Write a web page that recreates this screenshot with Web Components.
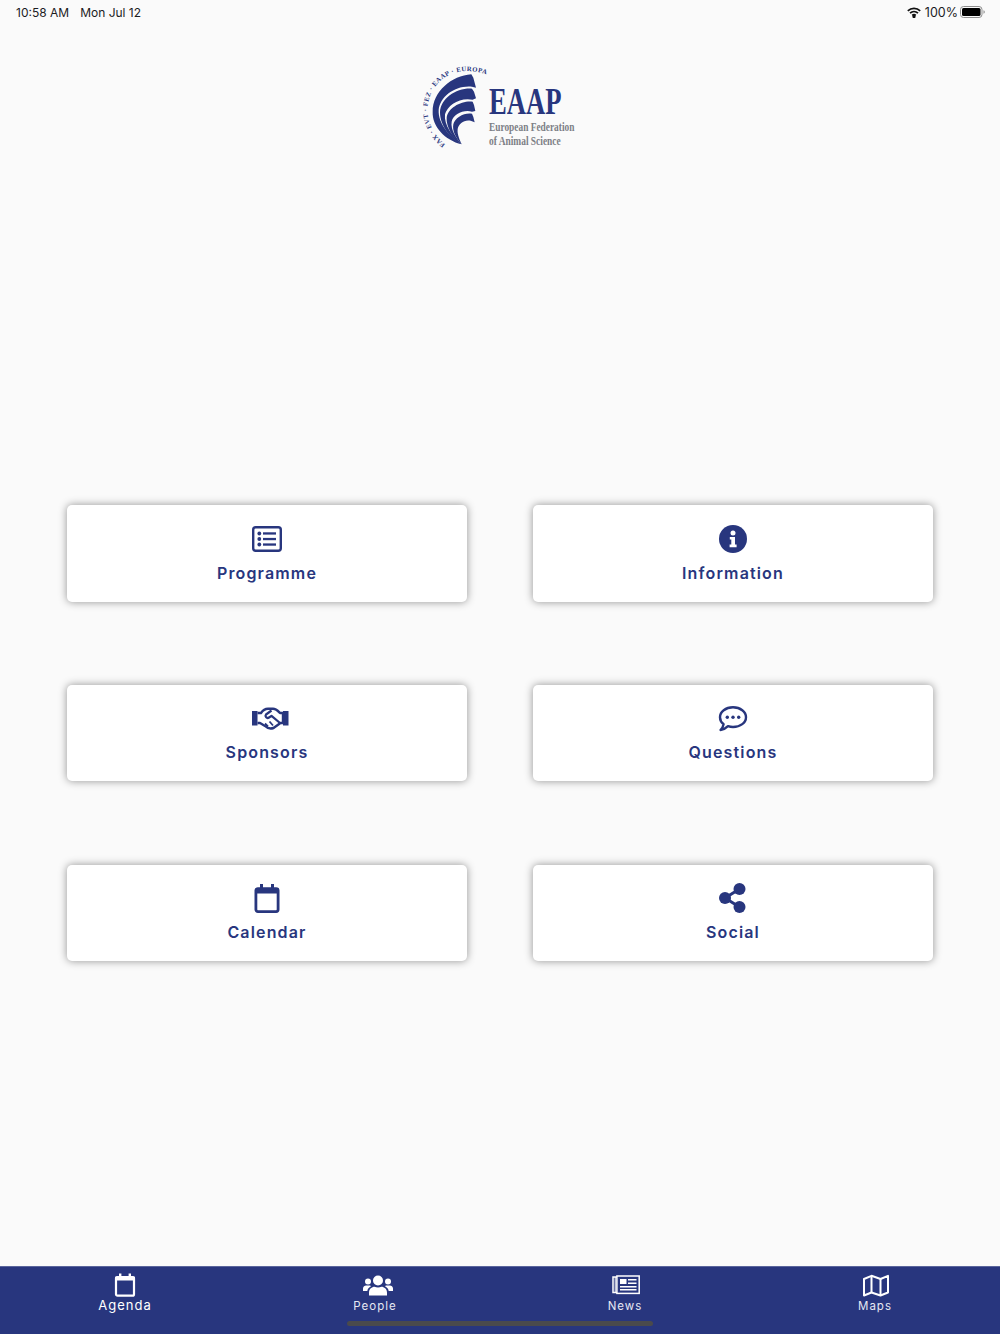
<!DOCTYPE html>
<html>
<head>
<meta charset="utf-8">
<title>EAAP</title>
<style>
html, body { margin: 0; height: 100%; background: #fafafa; }
body { font-family: Inter, "Liberation Sans", sans-serif; }
svg .line { fill: none; stroke: currentColor; }
</style>
</head>
<body>
<eaap-app>
  <status-bar slot="top"></status-bar>
  <eaap-logo slot="top"></eaap-logo>
  <menu-grid slot="top">
    <menu-card label="Programme">
      <svg width="30" height="26" viewBox="0 0 30 26" fill="currentColor"><rect x="1.2" y="1.2" width="27.6" height="23.6" rx="2.5" fill="none" stroke="currentColor" stroke-width="2.4"/><circle cx="7.3" cy="7.5" r="1.9"/><circle cx="7.3" cy="13" r="1.9"/><circle cx="7.3" cy="18.5" r="1.9"/><rect x="11" y="6.3" width="13" height="2.3"/><rect x="11" y="11.9" width="13" height="2.3"/><rect x="11" y="17.4" width="13" height="2.3"/></svg>
    </menu-card>
    <menu-card label="Information">
      <svg width="28" height="28" viewBox="0 0 28 28"><circle cx="14" cy="14" r="14" fill="currentColor"/><circle cx="14" cy="8" r="2.5" fill="#fff"/><path d="M10.8 12h5.2v7.6h1.6v2.6h-7v-2.6h1.7v-5h-1.5z" fill="#fff"/></svg>
    </menu-card>
    <menu-card label="Sponsors">
      <svg width="46" height="24" viewBox="-7 0 46 24"><rect x="1" y="5" width="5.5" height="14.500" fill="currentColor"/><rect x="32" y="5" width="5.500" height="14.500" fill="currentColor"/><path class="line" stroke-width="2.400" stroke-linejoin="round" d="M6.500 7H10C12 4 14.500 2.800 17 2.800H22C25 2.800 27 5 29 7H32V17H29.500L22.500 22C19.500 23 16 22 14 20L9 17H6.500"/><path class="line" stroke-width="2.200" stroke-linejoin="round" d="M20.500 4.500L15 8.500C13.600 10.500 15.800 13 18 11.500L20.500 9.800L29 17"/><path class="line" stroke-width="1.800" d="M14 17.500l3 3M18.500 15.500l3.500 4"/></svg>
    </menu-card>
    <menu-card label="Questions">
      <svg width="30" height="27" viewBox="0 0 30 27" fill="currentColor"><path d="M15 2.300C22.400 2.300 28 6.700 28 12.200S22.400 22 15 22C13.200 22 11.500 21.700 10 21.200C8 23.200 5.500 24.700 2.500 25C4 23.500 5.300 21.500 5.600 19.200C3.300 17.400 2 15 2 12.200C2 6.700 7.600 2.300 15 2.300Z" fill="none" stroke="currentColor" stroke-width="2.400" stroke-linejoin="round"/><circle cx="9.300" cy="12.200" r="1.700"/><circle cx="15" cy="12.200" r="1.700"/><circle cx="20.700" cy="12.200" r="1.700"/></svg>
    </menu-card>
    <menu-card label="Calendar">
      <svg width="26" height="29" viewBox="0 0 26 29" fill="currentColor"><rect x="1.900" y="4.600" width="22.200" height="23" rx="2" fill="none" stroke="currentColor" stroke-width="2.800"/><rect x="1" y="4" width="24" height="5.500" rx="1.500"/><rect x="6" y="0" width="3" height="6"/><rect x="17" y="0" width="3" height="6"/></svg>
    </menu-card>
    <menu-card label="Social">
      <svg width="28" height="30" viewBox="0 0 28 30" fill="currentColor"><circle cx="20.500" cy="6" r="6"/><circle cx="6" cy="15" r="6"/><circle cx="20.500" cy="24" r="6"/><path class="line" stroke-width="3" d="M20.500 6L6 15L20.500 24"/></svg>
    </menu-card>
  </menu-grid>
  <tab-bar slot="bottom">
    <tab-item label="Agenda" large>
      <svg width="22" height="24" viewBox="0 0 22 24" fill="currentColor"><rect x="2" y="4" width="18" height="18.700" rx="1.500" fill="none" stroke="currentColor" stroke-width="2.200"/><rect x="1" y="3.500" width="20" height="4" rx="1"/><rect x="5" y="0.500" width="2.400" height="4"/><rect x="14.600" y="0.500" width="2.400" height="4"/></svg>
    </tab-item>
    <tab-item label="People">
      <svg width="30" height="24" viewBox="0 -1 30 24" fill="currentColor" style="margin-left:6px"><circle cx="15" cy="6.500" r="5"/><circle cx="5" cy="7.500" r="3"/><circle cx="25" cy="7.500" r="3"/><path d="M6 21.500V18.500C6 15 9 12.800 11.500 12.800C13.500 13.700 16.500 13.700 18.500 12.800C21 12.800 24 15 24 18.500V21.500Z"/><path d="M0 17V14.500C0 12.500 1.800 11.500 3 11.500H6.500C7.300 11.500 7.800 12 8 12.300C6 13.300 4.500 15 4.300 17Z"/><path d="M30 17V14.500C30 12.500 28.200 11.500 27 11.500H23.500C22.700 11.500 22.200 12 22 12.300C24 13.300 25.500 15 25.700 17Z"/></svg>
    </tab-item>
    <tab-item label="News">
      <svg width="28" height="24" viewBox="0 0 28 24" fill="currentColor" style="margin-left:2px"><rect x="4.900" y="3" width="22.300" height="17.400" fill="none" stroke="currentColor" stroke-width="1.500"/><path class="line" stroke-width="1.500" d="M4.900 4H1V19.600H5"/><rect x="2.700" y="4" width="1" height="15"/><rect x="8" y="6" width="6.500" height="5"/><rect x="16" y="6" width="8.500" height="1.500"/><rect x="16" y="9.500" width="8.500" height="1.500"/><rect x="8" y="13" width="16.500" height="1.500"/><rect x="8" y="16" width="16.500" height="1.500"/></svg>
    </tab-item>
    <tab-item label="Maps">
      <svg width="28" height="24" viewBox="0 0 28 24" style="margin-left:2px"><path class="line" stroke-width="2" stroke-linejoin="round" d="M2 6L9.500 2.800L18.500 6L26 2.800V19.500L18.500 22.500L9.500 19.500L2 22.500Z"/><path class="line" stroke-width="2" d="M9.500 3V19.500M18.500 6V22"/></svg>
    </tab-item>
  </tab-bar>
</eaap-app>

<script>
class EaapApp extends HTMLElement {
  constructor() {
    super();
    const root = this.attachShadow({mode: 'open'});
    root.innerHTML = `
<style>
:host {
  display: flex;
  flex-direction: column;
  height: 1334px;
  background: #fafafa;
  overflow: hidden;
}
.main { flex: 1; display: block; }
</style>
<div class="main"><slot name="top"></slot></div>
<slot name="bottom"></slot>
    `;
  }
}

class StatusBar extends HTMLElement {
  constructor() {
    super();
    const root = this.attachShadow({mode: 'open'});
    root.innerHTML = `
<style>
:host {
  display: flex;
  align-items: center;
  height: 24px;
  padding: 0 15px 0 16px;
  font: 400 12px Inter, "Liberation Sans", sans-serif;
  color: #1c1c1e;
}
.date { margin-left: 11px; }
.right { margin-left: auto; display: flex; align-items: center; }
.pct { margin: 0 2px 0 4px; font-size: 12.5px; }
</style>
<span>10:58 AM</span><span class="date">Mon Jul 12</span>
<div class="right">
  <svg width="14" height="11" viewBox="0 0 14 11" fill="none" stroke="#111" stroke-width="1.700"><path d="M.8 3.900C4.300.6 9.700.6 13.200 3.900"/><path d="M3 6.200C5.300 4.100 8.700 4.100 11 6.200"/><path d="M5.200 8.300C6.200 7.500 7.800 7.500 8.800 8.300"/><circle cx="7" cy="9.500" r=".8" fill="#111"/></svg>
  <span class="pct">100%</span>
  <svg width="25" height="12" viewBox="0 0 25 12"><rect x=".5" y=".5" width="21.500" height="11" rx="3" fill="none" stroke="#8e8e8e"/><rect x="2" y="2" width="18.500" height="8" rx="1.500" fill="#000"/><path d="M23.500 4.200c.8.300 1.300 1 1.300 1.800s-.5 1.500-1.300 1.800z" fill="#8e8e8e"/></svg>
</div>
    `;
  }
}

class EaapLogo extends HTMLElement {
  constructor() {
    super();
    const root = this.attachShadow({mode: 'open'});
    root.innerHTML = `
<style>
:host { display: flex; justify-content: center; padding-top: 31px; }
svg { display: block; }
text { font-family: "Liberation Serif", serif; font-weight: 700; }
</style>
<svg width="180" height="105" viewBox="0 0 540 315">
  <defs><path id="ring" d="M106 268C50 225 35 150 75 95C105 55 160 32 240 62L300 90"/></defs>
  <text font-size="20" fill="#28367e" letter-spacing="1.400"><textPath href="#ring">FAX · EVT · FEZ · EAAP · EUROPA</textPath></text>
  <g fill="#28367e">
    <path d="M184 58L190 68L198 98L186 95C135 90 90 125 86 165C84 205 118 245 155 268C105 255 66 215 68 170C68 110 125 62 184 58Z"/>
    <path d="M186 101L192 110L198 130L188 134C150 126 112 150 105 178C101 210 128 245 155 268C118 250 90 210 90 172C92 130 140 98 186 101Z"/>
    <path d="M188 140L192 150L196 168L186 170C160 163 130 178 125 200C121 225 140 250 155 268C128 250 108 215 110 188C114 158 155 136 188 140Z"/>
    <path d="M186 176L190 186L194 202L184 198C165 192 146 205 143 222C141 240 150 255 155 268C138 250 126 228 130 208C134 188 163 172 186 176Z"/>
  </g>
  <g transform="translate(237 177) scale(.7 1)"><text font-size="114" fill="#28367e" textLength="311" lengthAdjust="spacingAndGlyphs">EAAP</text></g>
  <g transform="translate(237 227) scale(.76 1)"><text font-size="35" fill="#7d7f86" textLength="337" lengthAdjust="spacingAndGlyphs">European Federation</text></g>
  <g transform="translate(237 269) scale(.76 1)"><text font-size="35" fill="#7d7f86" textLength="283" lengthAdjust="spacingAndGlyphs">of Animal Science</text></g>
</svg>
    `;
  }
}

class MenuGrid extends HTMLElement {
  constructor() {
    super();
    const root = this.attachShadow({mode: 'open'});
    root.innerHTML = `
<style>
:host {
  display: grid;
  grid-template-columns: 400px 400px;
  column-gap: 66px;
  row-gap: 83.300px;
  padding: 345px 0 0 67px;
}
</style>
<slot></slot>
    `;
  }
}

class MenuCard extends HTMLElement {
  constructor() {
    super();
    const root = this.attachShadow({mode: 'open'});
    root.innerHTML = `
<style>
:host {
  display: flex;
  flex-direction: column;
  align-items: center;
  box-sizing: border-box;
  height: 96.500px;
  padding-top: 18.500px;
  background: #fff;
  border-radius: 5px;
  box-shadow: 0 0 9px rgba(0, 0, 0, .42);
  color: #28367e;
}
.icon { height: 30px; display: flex; align-items: center; justify-content: center; }
.label {
  margin-top: 9px;
  font: 600 16px/20px Inter, "Liberation Sans", sans-serif;
  letter-spacing: 1.150px;
}
</style>
<div class="icon"><slot></slot></div>
<div class="label"></div>
    `;
    root.querySelector('.label').textContent = this.getAttribute('label');
  }
}

class TabBar extends HTMLElement {
  constructor() {
    super();
    const root = this.attachShadow({mode: 'open'});
    root.innerHTML = `
<style>
:host {
  display: grid;
  grid-template-columns: repeat(4, 1fr);
  position: relative;
  box-sizing: border-box;
  height: 68px;
  background: #28367e;
  border-top: 1px solid #5a659c;
}
.home {
  position: absolute;
  left: 347px;
  bottom: 8px;
  width: 306px;
  height: 5px;
  border-radius: 3px;
  background: #4a4a4c;
}
</style>
<slot></slot>
<div class="home"></div>
    `;
  }
}

class TabItem extends HTMLElement {
  constructor() {
    super();
    const root = this.attachShadow({mode: 'open'});
    root.innerHTML = `
<style>
:host {
  display: flex;
  flex-direction: column;
  align-items: center;
  padding-top: 6px;
  color: #fff;
}
.icon { height: 24px; display: flex; align-items: center; }
.label {
  margin-top: 1px;
  font: 400 11.500px/16px Inter, "Liberation Sans", sans-serif;
  letter-spacing: 1px;
  color: #e6e8f2;
}
:host([large]) .label { font-size: 13px; margin-top: 0; color: #fff; }
</style>
<div class="icon"><slot></slot></div>
<div class="label"></div>
    `;
    root.querySelector('.label').textContent = this.getAttribute('label');
  }
}

customElements.define('eaap-app', EaapApp);
customElements.define('status-bar', StatusBar);
customElements.define('eaap-logo', EaapLogo);
customElements.define('menu-grid', MenuGrid);
customElements.define('menu-card', MenuCard);
customElements.define('tab-bar', TabBar);
customElements.define('tab-item', TabItem);
</script>
</body>
</html>
